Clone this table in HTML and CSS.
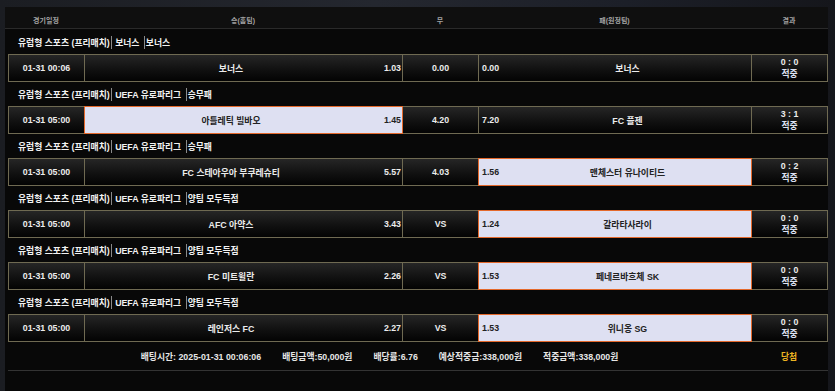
FILE: index.html
```html
<!DOCTYPE html>
<html lang="ko">
<head>
<meta charset="utf-8">
<link rel="stylesheet" href="styles.css">
</head>
<body>
<div class="panel">
  <div class="head grid">
    <div>경기일정</div><div>승(홈팀)</div><div>무</div><div>패(원정팀)</div><div>결과</div>
  </div>

  <div class="title">유럽형 스포츠 (프리매치)<span class="sep"></span> 보너스 <span class="sep sep2"></span>보너스</div>
  <div class="row">
    <div class="cell date">01-31 00:06</div>
    <div class="cell home"><span class="name">보너스</span><span class="odd">1.03</span></div>
    <div class="cell draw">0.00</div>
    <div class="cell away"><span class="odd">0.00</span><span class="name">보너스</span></div>
    <div class="cell res"><span>0 : 0</span><span class="hit">적중</span></div>
  </div>

  <div class="title">유럽형 스포츠 (프리매치)<span class="sep"></span> UEFA 유로파리그 <span class="sep sep2"></span>승무패</div>
  <div class="row">
    <div class="cell date">01-31 05:00</div>
    <div class="cell home sel"><span class="name">아틀레틱 빌바오</span><span class="odd">1.45</span></div>
    <div class="cell draw">4.20</div>
    <div class="cell away"><span class="odd">7.20</span><span class="name">FC 플젠</span></div>
    <div class="cell res"><span>3 : 1</span><span class="hit">적중</span></div>
  </div>

  <div class="title">유럽형 스포츠 (프리매치)<span class="sep"></span> UEFA 유로파리그 <span class="sep sep2"></span>승무패</div>
  <div class="row">
    <div class="cell date">01-31 05:00</div>
    <div class="cell home"><span class="name">FC 스테아우아 부쿠레슈티</span><span class="odd">5.57</span></div>
    <div class="cell draw">4.03</div>
    <div class="cell away sel"><span class="odd">1.56</span><span class="name">맨체스터 유나이티드</span></div>
    <div class="cell res"><span>0 : 2</span><span class="hit">적중</span></div>
  </div>

  <div class="title">유럽형 스포츠 (프리매치)<span class="sep"></span> UEFA 유로파리그 <span class="sep sep2"></span>양팀 모두득점</div>
  <div class="row">
    <div class="cell date">01-31 05:00</div>
    <div class="cell home"><span class="name">AFC 아약스</span><span class="odd">3.43</span></div>
    <div class="cell draw">VS</div>
    <div class="cell away sel"><span class="odd">1.24</span><span class="name">갈라타사라이</span></div>
    <div class="cell res"><span>0 : 0</span><span class="hit">적중</span></div>
  </div>

  <div class="title">유럽형 스포츠 (프리매치)<span class="sep"></span> UEFA 유로파리그 <span class="sep sep2"></span>양팀 모두득점</div>
  <div class="row">
    <div class="cell date">01-31 05:00</div>
    <div class="cell home"><span class="name">FC 미트윌란</span><span class="odd">2.26</span></div>
    <div class="cell draw">VS</div>
    <div class="cell away sel"><span class="odd">1.53</span><span class="name">페네르바흐체 SK</span></div>
    <div class="cell res"><span>0 : 0</span><span class="hit">적중</span></div>
  </div>

  <div class="title">유럽형 스포츠 (프리매치)<span class="sep"></span> UEFA 유로파리그 <span class="sep sep2"></span>양팀 모두득점</div>
  <div class="row">
    <div class="cell date">01-31 05:00</div>
    <div class="cell home"><span class="name">레인저스 FC</span><span class="odd">2.27</span></div>
    <div class="cell draw">VS</div>
    <div class="cell away sel"><span class="odd">1.53</span><span class="name">위니옹 SG</span></div>
    <div class="cell res"><span>0 : 0</span><span class="hit">적중</span></div>
  </div>

  <div class="foot">
    <div class="sums">
      <span>배팅시간: 2025-01-31 00:06:06</span>
      <span>배팅금액:50,000원</span>
      <span>배당률:6.76</span>
      <span>예상적중금:338,000원</span>
      <span>적중금액:338,000원</span>
    </div>
    <div class="win">당첨</div>
  </div>
</div>
</body>
</html>
```

FILE: styles.css
```css
html, body {
  margin: 0;
  padding: 0;
}
body {
  width: 835px;
  height: 391px;
  overflow: hidden;
  background: linear-gradient(90deg, #1b1d22 0%, #24272f 45%, #1c1f28 75%, #15161b 100%);
  font-family: "Liberation Sans", "Noto Sans CJK KR", sans-serif;
  font-weight: 700;
  color: #ececec;
  font-size: 8.8px;
}
.panel {
  margin: 7px 7px 0 5px;
  padding: 0 0 0 3px;
  background: #080808;
  height: 384px;
  box-sizing: border-box;
}
.grid {
  display: grid;
  grid-template-columns: 76px 318px 76px 273px 76px;
}
.head {
  height: 22px;
  align-items: end;
  padding-bottom: 3px;
  box-sizing: border-box;
  border-bottom: 1px solid #2a2a2a;
  background: #0f0f0f;
  margin-left: -3px;
  padding-left: 3px;
  color: #a4a4a4;
  font-size: 7px;
  text-align: center;
}
.head > div { line-height: 8px; }
.title {
  height: 24px;
  display: flex;
  align-items: center;
  padding-left: 10px;
  color: #f2f2f2;
  white-space: pre;
}
.head + .title { margin-top: 1px; }
.sep {
  display: inline-block;
  width: 1px;
  height: 13px;
  background: #8a8a8a;
  margin: 0 1px 0 1px;
}
.sep2 { margin-left: 2px; }
.row {
  display: flex;
  height: 28px;
}
.cell {
  box-sizing: border-box;
  height: 28px;
  border: 1px solid #6f6a52;
  background: linear-gradient(180deg, #262626 0%, #111 55%, #030303 100%);
  display: flex;
  align-items: center;
  justify-content: center;
  margin-left: -1px;
  position: relative;
}
.cell:first-child { margin-left: 0; }
.date { width: 77px; }
.home { width: 319px; justify-content: flex-start; }
.draw { width: 77px; }
.away { width: 274px; justify-content: flex-start; }
.res {
  width: 77px;
  flex-direction: column;
  line-height: 12px;
}
.hit { color: #dfe2f2; }
.name {
  flex: 1;
  text-align: center;
}
.home .name { padding-left: 2px; }
.home .odd { width: 26px; text-align: right; padding-right: 1px; }
.away .odd { width: 26px; text-align: left; padding-left: 3px; }
.away .name { padding-right: 4px; }
.sel {
  background: #dee0f2;
  border-color: #e4692c;
  color: #222;
  z-index: 1;
}
.foot {
  display: grid;
  grid-template-columns: 743px 76px;
  align-items: center;
  height: 29px;
  border-bottom: 1px solid #333;
  box-sizing: border-box;
}
.sums {
  display: flex;
  justify-content: center;
  gap: 21px;
  color: #e6e6e6;
}
.win {
  text-align: center;
  color: #eab322;
}
```
